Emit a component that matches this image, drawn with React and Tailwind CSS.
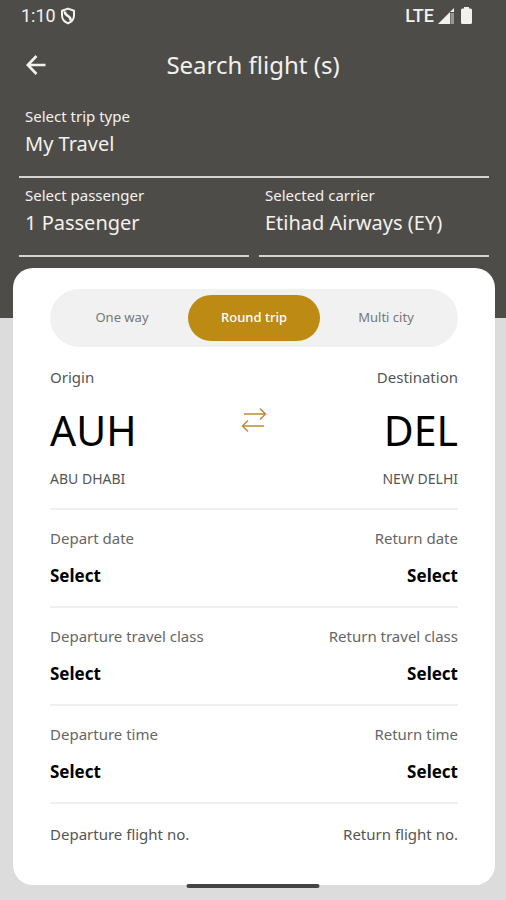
import { useState } from "react";

function StatusBar() {
  return (
    <div className="flex h-[31px] items-center justify-between pl-[21px] pr-[34px] text-[#f3f1ee]">
      <div className="flex items-center gap-1">
        <span className="font-['Roboto',sans-serif] text-[18px] leading-6">1:10</span>
        <svg className="h-[18px] w-4" viewBox="0 0 16 18" fill="none" aria-hidden="true">
          <path
            d="M8 1.6 L14 3.8 V8.6 C14 12.2 11.6 14.9 8 16.4 C4.4 14.9 2 12.2 2 8.6 V3.8 Z"
            stroke="currentColor"
            strokeWidth="2"
            strokeLinejoin="round"
          />
          <path d="M5 4.4 C4.4 7 6 7.8 8 9 C10 10.2 11 11.2 10.4 13.6" stroke="currentColor" strokeWidth="2.6" />
        </svg>
      </div>
      <div className="flex items-center">
        <span className="font-['Roboto',sans-serif] text-[18px] font-medium leading-6">LTE</span>
        <svg className="ml-1 h-4 w-4" viewBox="0 0 16 16" aria-hidden="true">
          <path d="M0 16 L12 4 V16 Z" fill="currentColor" />
          <path d="M12 4 L16 0 V4 Z" fill="currentColor" />
          <path d="M12.5 5 H16 V16 H12.5 Z" fill="currentColor" opacity="0.45" />
        </svg>
        <svg className="ml-[7px] h-[17px] w-[11px]" viewBox="0 0 11 17" fill="currentColor" aria-hidden="true">
          <path d="M3 0 H8 V1.5 H9.5 Q11 1.5 11 3 V15.5 Q11 17 9.5 17 H1.5 Q0 17 0 15.5 V3 Q0 1.5 1.5 1.5 H3 Z" />
        </svg>
      </div>
    </div>
  );
}

function HeaderField({ id, label, value }) {
  return (
    <div className="flex flex-1 flex-col border-b-2 border-[#d6d4d1] px-1.5 pb-5 pt-[7px] text-[#f3f1ee]">
      <label htmlFor={id} className="text-[15px] leading-5">
        {label}
      </label>
      <select id={id} className="mt-1.5 h-6 w-full appearance-none bg-transparent text-[20px] leading-6 outline-none">
        <option>{value}</option>
      </select>
    </div>
  );
}

function Picker({ id, label, right }) {
  return (
    <div className={right ? "flex flex-col items-end" : "flex flex-col items-start"}>
      <span id={id} className="text-[15px] leading-5 text-[#666666]">
        {label}
      </span>
      <button type="button" aria-describedby={id} className="mt-4 text-[17px] font-bold leading-6 text-black">
        Select
      </button>
    </div>
  );
}

function Airport({ label, code, city, right }) {
  return (
    <div className={right ? "flex flex-col items-end" : "flex flex-col items-start"}>
      <span className="text-[15px] leading-5 text-[#555555]">{label}</span>
      <button type="button" className="mt-[18px] text-[41px] leading-[50px] text-black">
        {code}
      </button>
      <span className="mt-[14px] text-[14px] leading-5 text-[#555555]">{city}</span>
    </div>
  );
}

const rows = [
  ["date", "Depart date", "Return date"],
  ["class", "Departure travel class", "Return travel class"],
  ["time", "Departure time", "Return time"],
];

const trips = ["One way", "Round trip", "Multi city"];

export default function App() {
  const [trip, setTrip] = useState("Round trip");
  return (
    <div className="relative min-h-screen bg-[#dcdcdc] pb-[15px] font-['Noto_Sans',sans-serif]">
      <header className="bg-[#4e4c49] pb-[61px]">
        <StatusBar />
        <div className="grid h-[68px] grid-cols-[48px_1fr_48px] items-center px-3 text-[#f3f1ee]">
          <button type="button" aria-label="Back" className="flex h-12 w-12 items-center justify-center">
            <svg className="h-5 w-5" viewBox="0 0 20 20" fill="none" stroke="currentColor" strokeWidth="2.6" aria-hidden="true">
              <path d="M19.5 10 H2 M10.5 1 L1.8 10 L10.5 19" />
            </svg>
          </button>
          <h1 className="text-center text-[24px] leading-8">Search flight (s)</h1>
        </div>
        <div className="flex flex-col pl-[19px] pr-[17px]">
          <HeaderField id="trip-type" label="Select trip type" value="My Travel" />
          <div className="flex gap-2.5">
            <HeaderField id="passenger" label="Select passenger" value="1 Passenger" />
            <HeaderField id="carrier" label="Selected carrier" value="Etihad Airways (EY)" />
          </div>
        </div>
      </header>

      <main className="relative -mt-[50px] ml-[13px] mr-[11px] rounded-[20px] bg-white px-[37px] pb-[41px] pt-[21px]">
        <div className="grid grid-cols-3 rounded-full bg-[#f1f1f1] p-1.5">
          {trips.map((name) => (
            <button
              key={name}
              type="button"
              aria-pressed={trip === name}
              onClick={() => setTrip(name)}
              className={
                trip === name
                  ? "h-[46px] rounded-full bg-[#bd8b13] text-[13px] font-medium text-white"
                  : "h-[46px] rounded-full text-[13px] text-[#777777]"
              }
            >
              {name}
            </button>
          ))}
        </div>

        <section className="grid grid-cols-[1fr_26px_1fr] border-b-2 border-[#efefef] pb-[19px] pt-5">
          <Airport label="Origin" code="AUH" city="ABU DHABI" />
          <button type="button" aria-label="Swap origin and destination" className="mt-10 h-[26px] w-[26px] text-[#bd8b3a]">
            <svg className="h-[26px] w-[26px]" viewBox="0 0 26 26" fill="none" stroke="currentColor" strokeWidth="1.5" aria-hidden="true">
              <path d="M3 7 H24 M19 1.5 L24.5 7 L19 12.5" />
              <path d="M23 19 H2 M7 13.5 L1.5 19 L7 24.5" />
            </svg>
          </button>
          <Airport label="Destination" code="DEL" city="NEW DELHI" right />
        </section>

        {rows.map(([key, left, right]) => (
          <section key={key} className="flex justify-between border-b-2 border-[#efefef] pb-[18px] pt-[18px]">
            <Picker id={key + "-out"} label={left} />
            <Picker id={key + "-back"} label={right} right />
          </section>
        ))}

        <section className="flex justify-between pt-5 text-[15px] leading-5 text-[#555555]">
          <span>Departure flight no.</span>
          <span>Return flight no.</span>
        </section>
      </main>

      <div className="absolute bottom-3 left-1/2 h-1 w-[133px] -translate-x-1/2 rounded-full bg-[#444444]" />
    </div>
  );
}
